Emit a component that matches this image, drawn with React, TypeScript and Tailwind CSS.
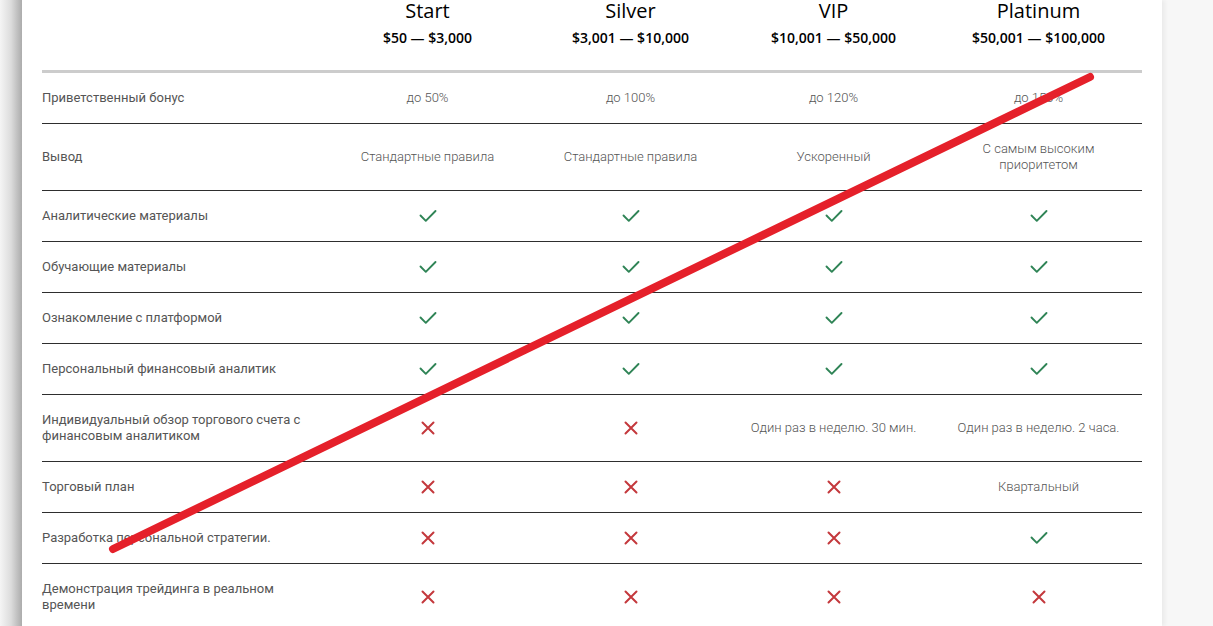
import React from "react";

type Cell = "yes" | "no" | string;

const plans = [
  { name: "Start", range: "$50 — $3,000" },
  { name: "Silver", range: "$3,001 — $10,000" },
  { name: "VIP", range: "$10,001 — $50,000" },
  { name: "Platinum", range: "$50,001 — $100,000" },
];

const rows: { label: string; cells: Cell[] }[] = [
  { label: "Приветственный бонус", cells: ["до 50%", "до 100%", "до 120%", "до 150%"] },
  {
    label: "Вывод",
    cells: ["Стандартные правила", "Стандартные правила", "Ускоренный", "С самым высоким приоритетом"],
  },
  { label: "Аналитические материалы", cells: ["yes", "yes", "yes", "yes"] },
  { label: "Обучающие материалы", cells: ["yes", "yes", "yes", "yes"] },
  { label: "Ознакомление с платформой", cells: ["yes", "yes", "yes", "yes"] },
  { label: "Персональный финансовый аналитик", cells: ["yes", "yes", "yes", "yes"] },
  {
    label: "Индивидуальный обзор торгового счета с финансовым аналитиком",
    cells: ["no", "no", "Один раз в неделю. 30 мин.", "Один раз в неделю. 2 часа."],
  },
  { label: "Торговый план", cells: ["no", "no", "no", "Квартальный"] },
  { label: "Разработка персональной стратегии.", cells: ["no", "no", "no", "yes"] },
  { label: "Демонстрация трейдинга в реальном времени", cells: ["no", "no", "no", "no"] },
];

function Check() {
  return (
    <svg width="18" height="14" viewBox="0 0 18 14" fill="none">
      <path d="M1.5 6.5 L6.8 11.8 L16.5 2" stroke="#2f8456" strokeWidth="1.9" strokeLinecap="round" strokeLinejoin="round" />
    </svg>
  );
}

function Cross() {
  return (
    <svg width="14" height="14" viewBox="0 0 14 14" fill="none">
      <path d="M1.5 1.5 L12.5 12.5 M12.5 1.5 L1.5 12.5" stroke="#c4383c" strokeWidth="2" strokeLinecap="round" />
    </svg>
  );
}

function renderCell(cell: Cell) {
  if (cell === "yes") return <Check />;
  if (cell === "no") return <Cross />;
  return <span>{cell}</span>;
}

export default function App() {
  return (
    <main
      className="relative flex h-[626px] w-full overflow-hidden bg-[#f7f7f7]"
      style={{ fontFamily: "Roboto, 'Liberation Sans', sans-serif" }}
    >
      <div className="w-[22px] shrink-0 bg-linear-to-r from-[#f5f5f5] via-[#dcdcdc] to-[#acacac]" />

      <section className="w-[1140px] shrink-0 bg-white px-5 shadow-[3px_0_4px_rgba(0,0,0,0.05)]">
        {/* header */}
        <div className="grid h-[73px] grid-cols-[284px_203px_203px_203px_1fr] border-b-[3px] border-[#cccccc]">
          <div />
          {plans.map((plan) => (
            <div
              key={plan.name}
              className="flex flex-col items-center pt-px text-black"
              style={{ fontFamily: "'Open Sans', 'Liberation Sans', sans-serif" }}
            >
              <p className="text-[20px] leading-[20px] font-medium">{plan.name}</p>
              <p className="mt-[10px] text-[14px] leading-[14px] font-semibold">{plan.range}</p>
            </div>
          ))}
        </div>

        {/* rows */}
        {rows.map((row) => (
          <div
            key={row.label}
            className="grid grid-cols-[284px_203px_203px_203px_1fr] border-b border-[#2e2e2e]"
          >
            <div className="flex items-center py-[17px] pr-4 text-[13px] leading-4 text-[#555]">{row.label}</div>
            {row.cells.map((cell, i) => (
              <div
                key={i}
                className="flex items-center justify-center px-4 py-[17px] text-center text-[13px] leading-4 font-light text-[#555]"
              >
                {renderCell(cell)}
              </div>
            ))}
          </div>
        ))}
      </section>

      {/* red strike-through drawn over the table */}
      <svg className="pointer-events-none absolute inset-0" width="1213" height="626" viewBox="0 0 1213 626">
        <path d="M113 549 L1090 77" stroke="#e5202a" strokeWidth="8" strokeLinecap="round" fill="none" />
      </svg>
    </main>
  );
}
